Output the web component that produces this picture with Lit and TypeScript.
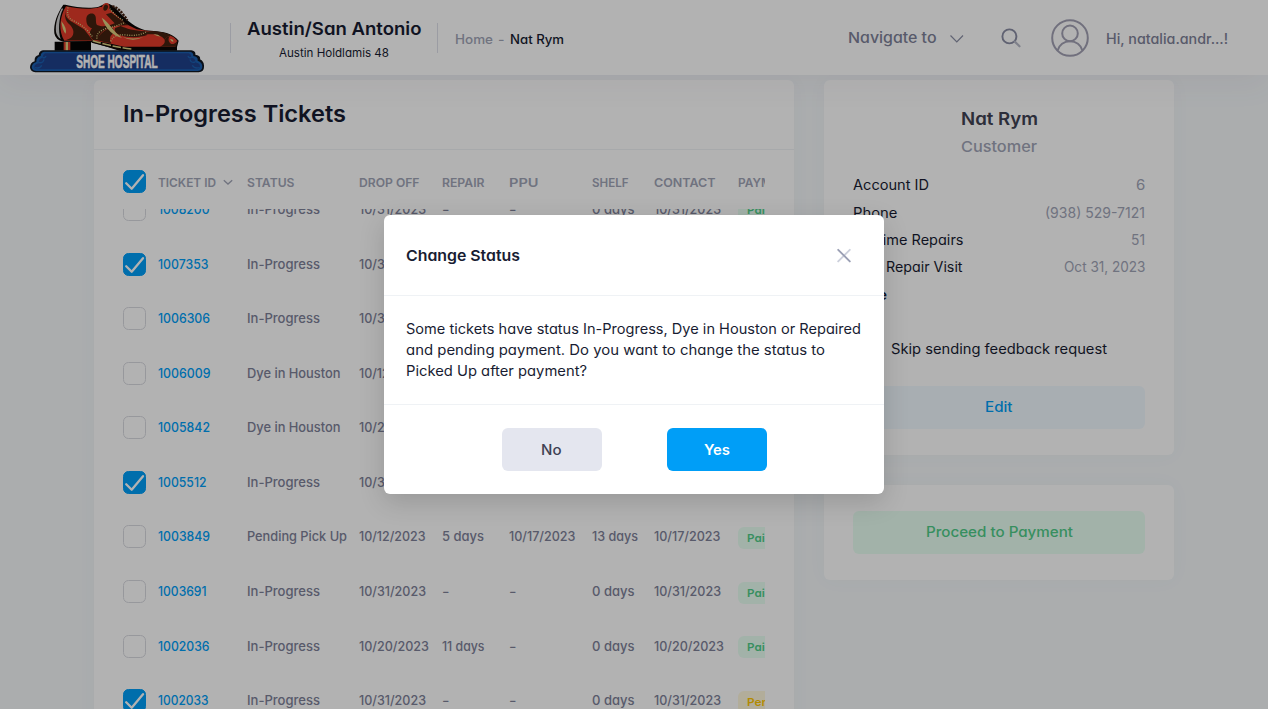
import { LitElement, html, css, nothing } from "lit";
import { customElement, property } from "lit/decorators.js";

/** Inline text whose glyphs are widened or narrowed to occupy a given width. */
@customElement("fit-text")
class FitText extends LitElement {
  @property({ type: Number }) w = 0;
  static styles = css`
    :host { display: inline-block; white-space: pre; transform-origin: 0 50%; }
  `;
  render() {
    return html`<slot></slot>`;
  }
  firstUpdated() {
    const natural = this.getBoundingClientRect().width;
    if (!this.w || !natural) return;
    this.style.transform = `scaleX(${this.w / natural})`;
    this.style.marginRight = `${this.w - natural}px`;
  }
}

const fit = (text: string, w: number) => html`<fit-text .w=${w}>${text}</fit-text>`;

const base = css`
  * { box-sizing: border-box; }
  svg { display: block; flex: none; }
`;

@customElement("shoe-logo")
class ShoeLogo extends LitElement {
  static styles = [base, css`:host { display: block; width: 174px; height: 74px; }`];
  render() {
    return html`<svg width="174" height="74" viewBox="90 0 522 222">
      <path d="M164 125H273V152H164Z" fill="#050505"/>
      <path d="M191 126h20v26h-20z" fill="#d63c2a"/><path d="M197 126h7v26h-7z" fill="#dccf80"/>
      <path d="M190 14C172 40 160 70 163 100Q166 120 190 125L273 126 330 143 358 152H531V141L536 122C520 104 500 97 470 94L436 91C405 82 385 66 352 30Q330 5 313 12L296 20C270 26 230 22 196 14Z" fill="#0b0705"/>
      <path d="M186 24C171 50 166 75 168 96Q171 110 182 117C174 94 176 52 189 27Z" fill="#cfcfcf"/>
      <path d="M198 19C240 28 275 29 303 20L332 30 378 72 410 88 470 97C500 99 522 108 532 123L526 140H372L320 128 277 122H193C175 95 178 50 198 19Z" fill="#e33b2a"/>
      <path d="M199 19C190 46 200 56 218 67L252 88 278 121H192C210 118 222 110 220 93 217 76 203 73 197 58 193 45 195 30 199 19Z" fill="#43200f"/>
      <path d="M259 60C258 45 268 38 280 41 293 47 284 66 291 75 312 83 330 76 344 70L318 43 334 38 385 76C345 76 300 84 294 120L280 121C266 106 268 94 276 85 263 80 259 71 259 60Z" fill="#43200f"/>
      <path d="M290 120C300 98 322 84 338 84 344 94 342 98 332 108 328 116 330 124 334 130L312 126Z" fill="#43200f"/>
      <path d="M362 78C380 86 400 92 438 94L440 106C420 113 385 114 358 105 344 98 342 90 346 84Z" fill="#43200f"/>
      <path d="M436 95C455 91 498 94 520 110 508 105 500 111 494 119 482 103 460 101 436 104Z" fill="#43200f"/>
      <path d="M494 119Q500 109 510 108C503 115 505 127 514 132Q525 133 532 122L528 140H480Q497 132 494 119Z" fill="#43200f"/>
      <path d="M305 53C330 68 338 95 366 113 342 108 318 90 305 53Z" fill="#dccf80"/>
      <path d="M184 63Q187 92 197 101 202 86 184 63Z" fill="#dccf80"/>
      <path d="M368 111Q399 127 430 111 400 120 368 111ZM460 103Q474 102 482 110 470 109 460 103ZM510 117Q515 127 520 125 521 117 510 117Z" fill="#dccf80"/>
      <path d="M275 120Q302 131 350 142L395 150H360L275 128Z" fill="#120b07"/>
      <path d="M278 122Q330 139 394 147" fill="none" stroke="#dccf80" stroke-width="4.500" stroke-dasharray="26 5"/>
      <g fill="none" stroke="#dccf80" stroke-width="4" stroke-dasharray="3 4">
        <path d="M204 22C200 46 205 56 222 63 248 76 265 92 278 111"/>
        <path d="M291 116C286 96 315 83 342 80L374 68"/>
        <path d="M332 124C342 105 356 103 379 105 404 108 422 105 438 96"/>
        <path d="M329 26Q350 51 371 62"/>
      </g>
      <path d="M337 18Q360 25 382 61" fill="none" stroke="#43200f" stroke-width="7" stroke-dasharray="7 3"/>
      <ellipse cx="317" cy="23" rx="9" ry="12" fill="#43200f" stroke="#e33b2a" stroke-width="5" transform="rotate(18 317 23)"/>
      <path d="M129 151H574Q588 153 586 164 603 166 600 178 613 184 612 201 612 216 596 217H106Q91 216 90 202 91 187 104 184 102 169 116 165 117 153 129 151Z" fill="#111722"/>
      <path d="M132 155H570Q581 157 580 168 595 170 593 182 607 187 607 200 606 213 592 213H110Q96 213 95 202 97 189 109 186 108 172 122 168 122 157 132 155Z" fill="#1a5fb0"/>
      <path d="M136 160H566Q575 163 573 173 589 175 585 187 601 190 600 200 598 208 588 208H116Q102 208 103 201 104 192 117 190 114 177 128 173 129 162 136 160Z" fill="#1f418c"/>
      <path d="M117 188Q129 190 132 178M104 203Q121 207 125 196M585 186Q573 190 570 178M599 203Q582 207 577 196M128 172Q135 176 138 168M574 172Q567 176 564 168" fill="none" stroke="#1a5fb0" stroke-width="4"/>
      <text x="229" y="204" textLength="244" lengthAdjust="spacingAndGlyphs" font-family="'Liberation Sans', sans-serif" font-weight="700" font-size="53" fill="#fff" stroke="#fff" stroke-width="1.600">SHOE HOSPITAL</text>
    </svg>`;
  }
}

@customElement("check-box")
class CheckBox extends LitElement {
  @property({ type: Boolean }) on = false;
  static styles = [base, css`
    :host { display: block; width: 23px; height: 23px; }
    .box { width: 23px; height: 23px; border: 1px solid #d9dae0; border-radius: 5.5px; }
    .on { border-color: #009ef7; background: #009ef7; }
    .on svg { margin: -1px; }
  `];
  render() {
    return html`<div class="box ${this.on ? "on" : ""}">${this.on
      ? html`<svg width="23" height="23" viewBox="0 0 23 23"><path d="M3.200 13.200L8.700 18.700L20 5.200" fill="none" stroke="#fff" stroke-width="2.300" stroke-linecap="round" stroke-linejoin="round"/></svg>`
      : nothing}</div>`;
  }
}

@customElement("top-bar")
class TopBar extends LitElement {
  static styles = [base, css`
    :host { display: flex; align-items: flex-start; height: 75px; background: #fff; padding-left: 30px; box-shadow: 0 10px 30px rgba(82, 63, 105, .06); position: relative; }
    .line { width: 1px; height: 30px; background: #dfe0ea; margin-top: 23px; }
    .l1 { margin-left: 26px; }
    .store { width: 206px; text-align: center; color: #181c32; padding-top: 17px; }
    .name { font-size: 17.8px; font-weight: 600; line-height: 24px; }
    .sub { font-size: 11.4px; line-height: 16px; margin-top: 4px; }
    .crumbs { display: flex; gap: 5.5px; margin-left: 16.5px; padding-top: 30px; font-size: 12.6px; line-height: 20px; font-weight: 500; color: #a1a5b7; }
    .now { color: #181c32; }
    .right { margin-left: auto; display: flex; align-items: center; height: 76px; padding-right: 40px; color: #7e8299; font-weight: 500; }
    .nav { font-size: 14.8px; }
    .hi { font-size: 14.2px; margin-left: 17px; }
    .chev { margin-left: 13px; }
    .find { margin-left: 37px; }
    .user { margin-left: 30px; }
  `];
  render() {
    return html`<shoe-logo></shoe-logo>
      <div class="line l1"></div>
      <div class="store">
        <div class="name">${fit("Austin/San Antonio", 174.5)}</div>
        <div class="sub">${fit("Austin Holdlamis 48", 110)}</div>
      </div>
      <div class="line"></div>
      <div class="crumbs">${fit("Home", 38)}${fit("-", 6.5)}<span class="now">${fit("Nat Rym", 54)}</span></div>
      <div class="right">
        <span class="nav">${fit("Navigate to", 88.5)}</span>
        <svg class="chev" width="15" height="15" viewBox="0 0 15 15"><path d="M1.500 4.500L7.800 10.800L14 4.500" fill="none" stroke="#8b8fa5" stroke-width="1.200"/></svg>
        <svg class="find" width="20" height="20" viewBox="0 0 20 20"><circle cx="8.400" cy="8.400" r="7" fill="none" stroke="#8a8da4" stroke-width="1.900"/><path d="M13.800 13.600L18.500 18.300" stroke="#b7b9c8" stroke-width="2.200" stroke-linecap="round"/></svg>
        <svg class="user" width="38" height="38" viewBox="0 0 38 38" fill="none" stroke="#a2a1b4" stroke-width="2"><circle cx="19" cy="19" r="17.800"/><circle cx="19" cy="14.400" r="7.800"/><path d="M6.600 31.500C8 25.800 13 22.200 19 22.200S30 25.800 31.400 31.500"/></svg>
        <span class="hi">${fit("Hi, natalia.andr...!", 122)}</span>
      </div>`;
  }
}

type Cell = [string, number];
interface Ticket { id: Cell; on?: boolean; status: Cell; drop: Cell; repair: Cell; ppu: Cell; shelf: Cell; contact: Cell; paid: boolean; }

const IP: Cell = ["In-Progress", 73];
const DY: Cell = ["Dye in Houston", 93.5];
const NONE: Cell = ["-", 7.5];
const ZERO: Cell = ["0 days", 42.5];
const D31: Cell = ["10/31/2023", 67];
const D20: Cell = ["10/20/2023", 70];
const D12: Cell = ["10/12/2023", 66.5];
const D17: Cell = ["10/17/2023", 66.5];

const tickets: Ticket[] = [
  { id: ["1008200", 51.5], status: IP, drop: D31, repair: NONE, ppu: NONE, shelf: ZERO, contact: D31, paid: true },
  { id: ["1007353", 50.5], on: true, status: IP, drop: D31, repair: NONE, ppu: NONE, shelf: ZERO, contact: D31, paid: true },
  { id: ["1006306", 52], status: IP, drop: D31, repair: NONE, ppu: NONE, shelf: ZERO, contact: D31, paid: true },
  { id: ["1006009", 52.5], status: DY, drop: D12, repair: NONE, ppu: NONE, shelf: ZERO, contact: D12, paid: true },
  { id: ["1005842", 52], status: DY, drop: D20, repair: NONE, ppu: NONE, shelf: ZERO, contact: D20, paid: true },
  { id: ["1005512", 48.5], on: true, status: IP, drop: D31, repair: NONE, ppu: NONE, shelf: ZERO, contact: D31, paid: false },
  { id: ["1003849", 52], status: ["Pending Pick Up", 100], drop: D12, repair: ["5 days", 42], ppu: D17, shelf: ["13 days", 46], contact: D17, paid: true },
  { id: ["1003691", 48.5], status: IP, drop: D31, repair: NONE, ppu: NONE, shelf: ZERO, contact: D31, paid: true },
  { id: ["1002036", 51.5], status: IP, drop: D20, repair: ["11 days", 42.5], ppu: NONE, shelf: ZERO, contact: D20, paid: true },
  { id: ["1002033", 50.5], on: true, status: IP, drop: D31, repair: NONE, ppu: NONE, shelf: ZERO, contact: D31, paid: false },
];

@customElement("ticket-card")
class TicketCard extends LitElement {
  static styles = [base, css`
    :host { display: flex; flex-direction: column; width: 700px; height: 660px; background: #fff; border-radius: 6px; box-shadow: 0 0 20px rgba(76, 87, 125, .035); flex: none; }
    .title { height: 70px; border-bottom: 1px solid #eff2f5; padding: 18px 29px 0; font-size: 22.6px; font-weight: 600; line-height: 32px; color: #181c32; }
    .table { margin: 0 29px; width: 642px; overflow: hidden; flex: 1; display: flex; flex-direction: column; }
    .row { display: grid; grid-template-columns: 35.4px 88.3px 112.3px 83.2px 67px 83px 61.6px 84px 90px; align-items: center; height: 54.6px; font-size: 12.9px; font-weight: 500; color: #7e8299; white-space: nowrap; flex: none; }
    .head { height: 59px; padding-top: 5px; font-size: 12.1px; font-weight: 600; color: #a1a5b7; }
    .head check-box { margin-top: -2px; }
    .sort { display: flex; align-items: center; gap: 7px; }
    .body { overflow: hidden; flex: 1; }
    .rows { margin-top: -26.9px; }
    .id { color: #009ef7; }
    .badge { justify-self: start; margin-top: 2px; height: 22px; padding: 0 9px; border-radius: 6px; font-size: 11px; font-weight: 600; line-height: 22px; }
    .ok { color: #50cd89; background: #e8fff3; }
    .wait { color: #ffc700; background: #fff8dd; }
  `];
  render() {
    const c = (v: Cell) => html`<span>${fit(v[0], v[1])}</span>`;
    return html`<div class="title">${fit("In-Progress Tickets", 223)}</div>
      <div class="table">
        <div class="row head">
          <check-box on></check-box>
          <span class="sort">${fit("TICKET ID", 58)}<svg width="10" height="10" viewBox="0 0 10 10"><path d="M.8 3.200L5 7L9.200 3.200" fill="none" stroke="#a1a5b7" stroke-width="1.300"/></svg></span>
          ${c(["STATUS", 47.5])}${c(["DROP OFF", 60.5])}${c(["REPAIR", 42.5])}${c(["PPU", 29.5])}${c(["SHELF", 36.5])}${c(["CONTACT", 61.5])}${c(["PAYMENT", 58])}
        </div>
        <div class="body"><div class="rows">
          ${tickets.map((t) => html`<div class="row">
            <check-box ?on=${!!t.on}></check-box>
            <span class="id">${fit(...t.id)}</span>
            ${c(t.status)}${c(t.drop)}${c(t.repair)}${c(t.ppu)}${c(t.shelf)}${c(t.contact)}
            <span class="badge ${t.paid ? "ok" : "wait"}">${t.paid ? fit("Paid", 25) : fit("Pending", 47)}</span>
          </div>`)}
        </div></div>
      </div>`;
  }
}

@customElement("customer-panel")
class CustomerPanel extends LitElement {
  static styles = [base, css`
    :host { display: flex; flex-direction: column; gap: 30px; width: 350px; flex: none; }
    .card { background: #fff; border-radius: 6px; box-shadow: 0 0 20px rgba(76, 87, 125, .035); padding: 26px 29px; }
    .who { height: 375px; text-align: center; }
    .name { font-size: 17.4px; font-weight: 600; line-height: 26px; color: #3f4254; }
    .role { font-size: 14.8px; font-weight: 500; line-height: 24px; margin: 3px 0 12.3px; color: #a1a5b7; }
    .pair { display: flex; justify-content: space-between; height: 27.3px; align-items: center; font-size: 14px; color: #181c32; }
    .val { color: #a1a5b7; }
    .note { font-weight: 600; }
    .skip { font-size: 14px; line-height: 20px; color: #181c32; margin: 31.7px 0 27px; }
    .btn { height: 43px; border-radius: 6px; display: flex; align-items: center; justify-content: center; padding-bottom: 2px; font-size: 14.2px; font-weight: 500; }
    .edit { background: #f1faff; color: #009ef7; }
    .pay { background: #e8fff3; color: #50cd89; }
  `];
  render() {
    const pair = (a: string, aw: number, b: string, bw: number) =>
      html`<div class="pair">${fit(a, aw)}<span class="val">${fit(b, bw)}</span></div>`;
    return html`<div class="card who">
        <div class="name">${fit("Nat Rym", 77)}</div>
        <div class="role">${fit("Customer", 76)}</div>
        ${pair("Account ID", 76, "6", 9.3)}
        ${pair("Phone", 44.5, "(938) 529-7121", 100)}
        ${pair("Lifetime Repairs", 110.5, "51", 14)}
        ${pair("Last Repair Visit", 109.5, "Oct 31, 2023", 81.5)}
        <div class="pair note">${fit("Note", 34)}</div>
        <div class="skip">${fit("Skip sending feedback request", 216)}</div>
        <div class="btn edit">${fit("Edit", 27.5)}</div>
      </div>
      <div class="card"><div class="btn pay">${fit("Proceed to Payment", 147)}</div></div>`;
  }
}

@customElement("status-dialog")
class StatusDialog extends LitElement {
  static styles = [base, css`
    :host { display: flex; flex-direction: column; width: 500px; height: 279px; background: #fff; border-radius: 6px; box-shadow: 0 8px 26px rgba(0, 0, 0, .15); color: #181c32; }
    .top { height: 81px; border-bottom: 1px solid #eff2f5; display: flex; align-items: center; justify-content: space-between; padding: 1px 32px 0 22.3px; font-size: 14.8px; font-weight: 600; }
    .msg { height: 109px; border-bottom: 1px solid #eff2f5; padding: 22px 22px 0; font-size: 14px; line-height: 21px; }
    .acts { display: flex; justify-content: center; gap: 65px; padding-top: 23px; }
    .btn { width: 100px; height: 43px; border-radius: 6px; display: flex; align-items: center; justify-content: center; font-size: 14.2px; font-weight: 500; background: #e4e6ef; color: #3f4254; }
    .yes { background: #009ef7; color: #fff; font-weight: 600; }
  `];
  render() {
    return html`<div class="top">${fit("Change Status", 114)}
        <svg width="16" height="16" viewBox="0 0 16 16" stroke-width="1.900" stroke-linecap="round"><path d="M13.800 1.800L2.200 13.400" stroke="#ccd0dc"/><path d="M2.200 1.800L13.800 13.400" stroke="#9a9fb4"/></svg>
      </div>
      <div class="msg">
        <div>${fit("Some tickets have status In-Progress, Dye in Houston or Repaired", 455)}</div>
        <div>${fit("and pending payment. Do you want to change the status to", 419)}</div>
        <div>${fit("Picked Up after payment?", 181)}</div>
      </div>
      <div class="acts"><div class="btn">${fit("No", 20.5)}</div><div class="btn yes">${fit("Yes", 26)}</div></div>`;
  }
}

@customElement("app-root")
class AppRoot extends LitElement {
  static styles = [base, css`
    :host { display: block; position: relative; height: 100vh; overflow: hidden; background: #f5f8fa; font-family: Inter, "Open Sans", sans-serif; font-feature-settings: "cv11"; font-size: 13px; }
    top-bar { z-index: 1; }
    .page { display: flex; gap: 30px; align-items: flex-start; padding: 5px 94px 0; }
    .shade { position: absolute; inset: 0; z-index: 2; background: rgba(0, 0, 0, .3); display: flex; align-items: center; justify-content: center; }
  `];
  render() {
    return html`<top-bar></top-bar>
      <div class="page"><ticket-card></ticket-card><customer-panel></customer-panel></div>
      <div class="shade"><status-dialog></status-dialog></div>`;
  }
}
